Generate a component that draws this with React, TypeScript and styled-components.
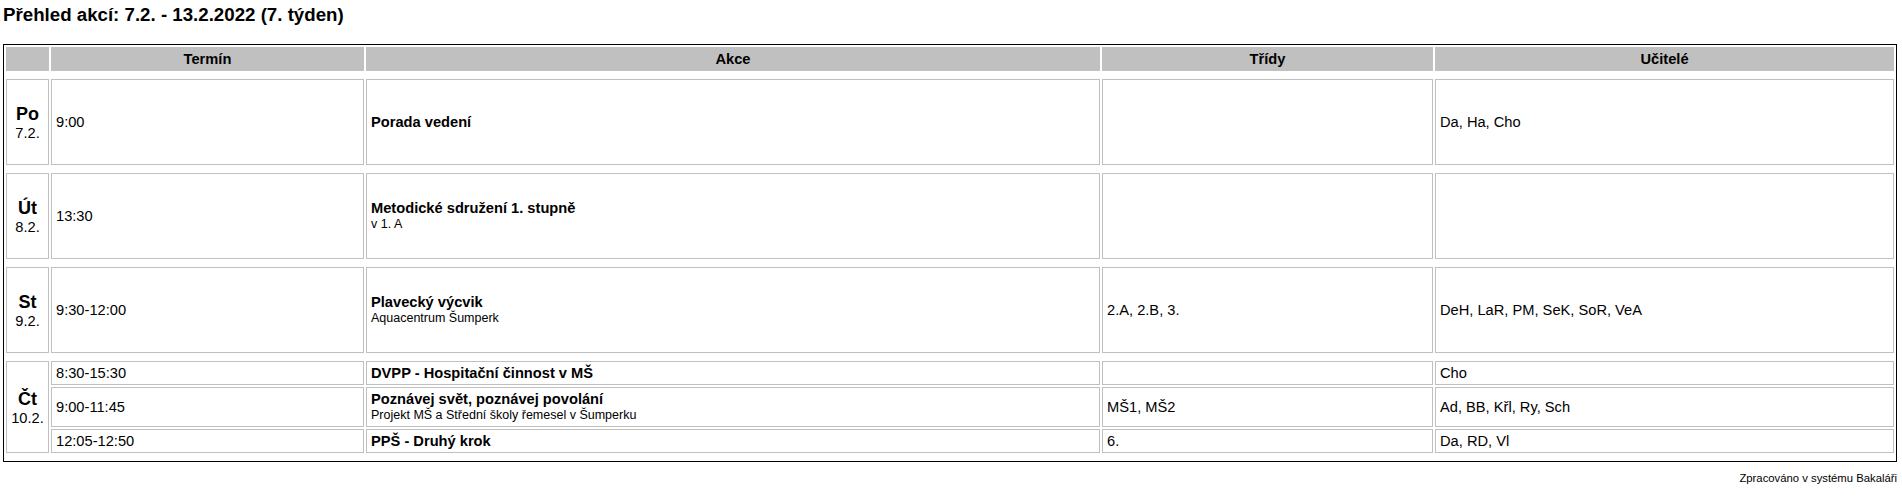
import React from "react";
import styled, { createGlobalStyle } from "styled-components";

const GlobalStyle = createGlobalStyle`
  html, body {
    margin: 0;
    padding: 0;
    background: #ffffff;
  }
  body {
    font-family: "Liberation Sans", Arial, sans-serif;
    color: #000000;
  }
`;

const Page = styled.div`
  padding: 4px 5px 0 3px;
`;

const Title = styled.h1`
  margin: 0 0 18px 0;
  font-size: 18.7px;
  font-weight: bold;
  line-height: normal;
`;

const Table = styled.div`
  display: grid;
  grid-template-columns: 43fr 313fr 734fr 331fr 459fr;
  gap: 2px;
  padding: 2px;
  border: 1px solid #000000;
  font-size: 14.67px;
`;

const HeaderCell = styled.div`
  background: #c0c0c0;
  border: 1px solid #c0c0c0;
  padding: 3px 4px;
  font-weight: bold;
  text-align: center;
  line-height: normal;
`;

const Spacer = styled.div`
  grid-column: 1 / -1;
  height: 4px;
`;

const Cell = styled.div<{ $span?: number; $center?: boolean }>`
  grid-row: ${(p) => (p.$span ? `span ${p.$span}` : "auto")};
  border: 1px solid #c0c0c0;
  padding: 3px 4px;
  display: flex;
  flex-direction: column;
  justify-content: center;
  align-items: ${(p) => (p.$center ? "center" : "flex-start")};
  line-height: normal;
`;

const DayCell = styled(Cell)`
  grid-column: 1;
  min-height: 86px;
  box-sizing: border-box;
  padding: 3px 1px;
`;

const DayName = styled.span`
  font-size: 18px;
  font-weight: bold;
`;

const DayDate = styled.span`
  font-size: 14.67px;
`;

const EventTitle = styled.span`
  font-weight: bold;
`;

const EventNote = styled.span`
  font-size: 12.5px;
  line-height: 16px;
`;

const Footer = styled.div`
  margin-top: 10px;
  text-align: right;
  font-size: 11.3px;
`;

type Event = {
  time: string;
  title: string;
  note?: string;
  classes: string;
  teachers: string;
};

type Day = {
  day: string;
  date: string;
  events: Event[];
};

const days: Day[] = [
  {
    day: "Po",
    date: "7.2.",
    events: [{ time: "9:00", title: "Porada vedení", classes: "", teachers: "Da, Ha, Cho" }],
  },
  {
    day: "Út",
    date: "8.2.",
    events: [
      { time: "13:30", title: "Metodické sdružení 1. stupně", note: "v 1. A", classes: "", teachers: "" },
    ],
  },
  {
    day: "St",
    date: "9.2.",
    events: [
      {
        time: "9:30-12:00",
        title: "Plavecký výcvik",
        note: "Aquacentrum Šumperk",
        classes: "2.A, 2.B, 3.",
        teachers: "DeH, LaR, PM, SeK, SoR, VeA",
      },
    ],
  },
  {
    day: "Čt",
    date: "10.2.",
    events: [
      { time: "8:30-15:30", title: "DVPP - Hospitační činnost v MŠ", classes: "", teachers: "Cho" },
      {
        time: "9:00-11:45",
        title: "Poznávej svět, poznávej povolání",
        note: "Projekt MŠ a Střední školy řemesel v Šumperku",
        classes: "MŠ1, MŠ2",
        teachers: "Ad, BB, Křl, Ry, Sch",
      },
      { time: "12:05-12:50", title: "PPŠ - Druhý krok", classes: "6.", teachers: "Da, RD, Vl" },
    ],
  },
];

export default function App() {
  return (
    <>
      <GlobalStyle />
      <Page>
        <Title>Přehled akcí: 7.2. - 13.2.2022 (7. týden)</Title>
        <Table>
          <HeaderCell />
          <HeaderCell>Termín</HeaderCell>
          <HeaderCell>Akce</HeaderCell>
          <HeaderCell>Třídy</HeaderCell>
          <HeaderCell>Učitelé</HeaderCell>
          <Spacer />
          {days.map((d) => (
            <React.Fragment key={d.day}>
              <DayCell $span={d.events.length} $center>
                <DayName>{d.day}</DayName>
                <DayDate>{d.date}</DayDate>
              </DayCell>
              {d.events.map((e, i) => (
                <React.Fragment key={i}>
                  <Cell>{e.time}</Cell>
                  <Cell>
                    <EventTitle>{e.title}</EventTitle>
                    {e.note && <EventNote>{e.note}</EventNote>}
                  </Cell>
                  <Cell>{e.classes}</Cell>
                  <Cell>{e.teachers}</Cell>
                </React.Fragment>
              ))}
              <Spacer />
            </React.Fragment>
          ))}
        </Table>
        <Footer>Zpracováno v systému Bakaláři</Footer>
      </Page>
    </>
  );
}
